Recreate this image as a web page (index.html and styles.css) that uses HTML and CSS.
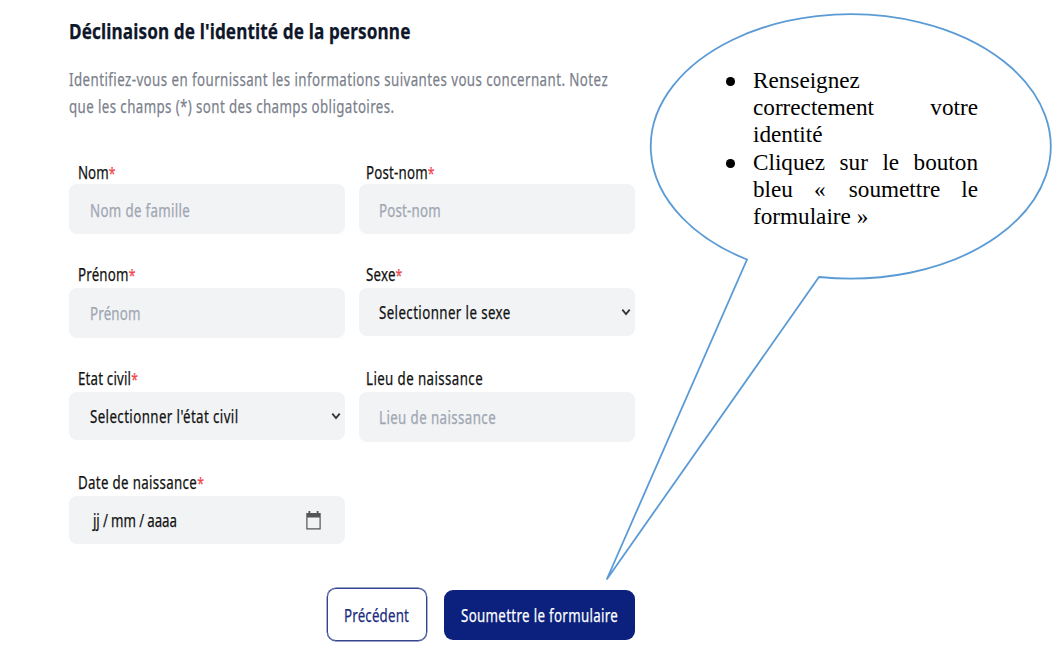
FILE: index.html
```html
<!DOCTYPE html>
<html lang="fr">
<head>
<meta charset="utf-8">
<title>Déclinaison de l'identité</title>
<link rel="stylesheet" href="styles.css">
</head>
<body>
<main class="form">
  <h1 class="title"><span class="t">Déclinaison de l'identité de la personne</span></h1>
  <p class="intro"><span class="t long">Identifiez-vous en fournissant les informations suivantes vous concernant. Notez</span><br><span class="t wide">que les champs (*) sont des champs obligatoires.</span></p>
  <div class="fields">
    <div class="field first">
      <div class="label"><span class="t tight">Nom<b>*</b></span></div>
      <div class="input empty"><span class="t">Nom de famille</span></div>
    </div>
    <div class="field first">
      <div class="label"><span class="t snug">Post-nom<b>*</b></span></div>
      <div class="input empty"><span class="t snug">Post-nom</span></div>
    </div>
    <div class="field">
      <div class="label"><span class="t snug">Prénom<b>*</b></span></div>
      <div class="input empty"><span class="t snug">Prénom</span></div>
    </div>
    <div class="field">
      <div class="label"><span class="t snug">Sexe<b>*</b></span></div>
      <div class="input select"><span class="t wide">Selectionner le sexe</span>
        <svg class="chevron" viewBox="0 0 10 8"><path d="M1.300 1.600 5 6 8.700 1.600"/></svg></div>
    </div>
    <div class="field">
      <div class="label"><span class="t snug">Etat civil<b>*</b></span></div>
      <div class="input select"><span class="t wide">Selectionner l'état civil</span>
        <svg class="chevron" viewBox="0 0 10 8"><path d="M1.300 1.600 5 6 8.700 1.600"/></svg></div>
    </div>
    <div class="field">
      <div class="label"><span class="t wide">Lieu de naissance</span></div>
      <div class="input empty"><span class="t wide">Lieu de naissance</span></div>
    </div>
    <div class="field">
      <div class="label"><span class="t">Date de naissance<b>*</b></span></div>
      <div class="input date"><span class="t dt">jj<i>/</i>mm<i>/</i>aaaa</span>
        <svg class="calendar" viewBox="0 0 15 19"><path d="M2.500 0h1.800v2h6.400V0h1.800v2H14.700V18.500H.3V2H2.500zM1.500 6.500v10.800h12V6.500z" fill-rule="evenodd"/></svg></div>
    </div>
  </div>
  <div class="actions">
    <div class="btn outline"><span class="t">Précédent</span></div>
    <div class="btn solid"><span class="t">Soumettre le formulaire</span></div>
  </div>
</main>
<aside class="callout">
  <svg class="bubble" viewBox="0 0 424 600"><path d="M107 259.500A200 132.200 0 1 1 179 277L-33.300 579.500Z"/></svg>
  <ul class="steps">
    <li>Renseignez<br>correctement votre identité</li>
    <li>Cliquez sur le bouton bleu «&#8195;soumettre le formulaire&nbsp;»</li>
  </ul>
</aside>
</body>
</html>
```
FILE: styles.css
```css
body {
  margin: 0;
  width: 1064px;
  height: 665px;
  overflow: hidden;
  position: relative;
  background: #fff;
  color: #111;
  font: 18.5px/22px "Noto Sans", sans-serif;
}
.form { width: 566px; padding: 15px 0 0 69px; }

/* condensed lettering */
.t {
  display: inline-block;
  transform: scaleX(.72);
  transform-origin: 0 50%;
  letter-spacing: .45px;
  white-space: nowrap;
  -webkit-text-stroke: .25px currentColor;
}
.tight { letter-spacing: 0; }
.snug { letter-spacing: .25px; }
.wide { letter-spacing: .55px; }
.long { letter-spacing: .6px; }
.t b { color: #f0474b; font-weight: 400; font-size: 17px; }

.title { margin: 0; font-size: 22px; line-height: 30px; font-weight: 700; color: #0f172a; }
.title .t { transform: scaleX(.78); letter-spacing: .15px; }
.intro { margin: 19.500px 0 0; width: 800px; line-height: 27px; color: #7b7f8c; }
.intro .t { vertical-align: top; }

.fields {
  display: grid;
  grid-template-columns: 276px 276px;
  grid-template-rows: 102px 104px 104px 104px;
  column-gap: 14px;
  margin-top: 42.500px;
}
.label { height: 22px; padding-left: 9px; margin-bottom: 3.400px; }
.field:nth-child(even) .label { padding-left: 7px; }
.first .label { margin-bottom: 1px; }
.input {
  box-sizing: border-box;
  display: flex;
  align-items: center;
  justify-content: space-between;
  height: 50px;
  padding: 0 4px 0 20.500px;
  border-radius: 8px;
  background: #f1f3f5;
}
.field:nth-child(even) .input { padding-left: 19.700px; }
.first .input { padding-top: 2px; }
.empty { color: #a0a6b2; }
.select, .date { height: 48px; }
.input .t { width: 0; }
.dt { margin-left: 3.500px; letter-spacing: -.1px; }
.dt i { font-style: normal; margin: 0 4.500px; }
.chevron { width: 10px; height: 8px; fill: none; stroke: #333; stroke-width: 1.800; }
.calendar { width: 15px; height: 19px; margin-right: 20px; fill: #555; }

.actions { display: flex; align-items: center; justify-content: flex-end; gap: 17px; margin-top: 13px; }
.btn { box-sizing: border-box; display: flex; align-items: center; border-radius: 9px; }
.btn .t { width: 0; }
.outline { width: 100px; height: 53px; padding-left: 15.500px; border: 1.500px solid #33438f; color: #1b2b80; box-shadow: 0 0 0 .4px #33438f; }
.solid { width: 191px; height: 50px; padding-left: 16.500px; background: #0b217d; color: #fff; }
.outline .t { letter-spacing: .25px; }

.callout { position: absolute; left: 640px; top: 0; width: 424px; height: 600px; }
.bubble { position: absolute; left: 0; top: 0; width: 424px; height: 600px; overflow: visible; fill: #fff; stroke: #5b9bd5; stroke-width: 1.800; }
.steps {
  position: relative;
  width: 225px;
  margin: 0;
  padding: 67px 0 0 113px;
  list-style: none;
  color: #000;
  font: 23.200px/26.900px "Liberation Serif", serif;
  text-align: justify;
}
.steps li { position: relative; margin-bottom: 1.500px; }
.steps li::before {
  content: "";
  position: absolute;
  left: -27px;
  top: 10px;
  width: 8.500px;
  height: 8.500px;
  border-radius: 50%;
  background: #000;
}
```
